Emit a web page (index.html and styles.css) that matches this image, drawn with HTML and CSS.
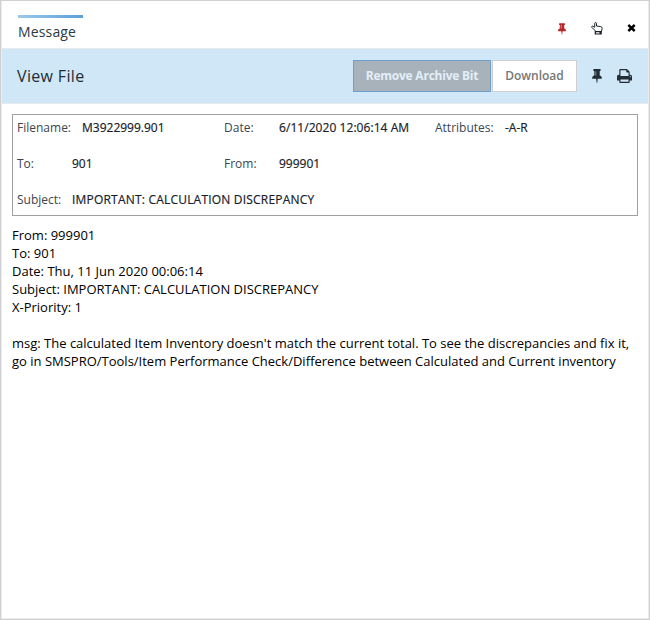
FILE: index.html
```html
<!DOCTYPE html>
<html lang="en">
<head>
<meta charset="utf-8">
<title>Message</title>
<link rel="stylesheet" href="styles.css">
</head>
<body>
<main class="window">
  <header class="titlebar">
    <div class="tab"><span class="tab-text">Message</span></div>
    <div class="window-actions">
      <svg class="pin-small" viewBox="320 128 1152 1664"><path d="M800 864v-448q0-14-9-23t-23-9-23 9-9 23v448q0 14 9 23t23 9 23-9 9-23zm672 352q0 26-19 45t-45 19h-429l-51 483q-2 12-10.5 20.5t-20.5 8.500h-1q-27 0-32-27l-76-485h-404q-26 0-45-19t-19-45q0-123 78.500-221.500t177.500-98.500v-512q-52 0-90-38t-38-90 38-90 90-38h640q52 0 90 38t38 90-38 90-90 38v512q99 0 177.500 98.500t78.500 221.500z"/></svg>
      <svg class="hand" viewBox="0 0 12 13"><path class="hand-line" d="M4 8.500 1 5.500Q.3 4.300 1.400 4L3.700 5.300V1.500Q3.700 .6 4.600.6T5.500 1.500V4L9.800 4.600Q11.300 5 11.200 6.400L10.400 9.500H4.500Z"/><path class="hand-cuff" fill-rule="evenodd" d="M3.700 9H10.800V12.500H3.700ZM5 10.200H8.500V11.400H5Z"/></svg>
      <svg class="close" viewBox="0 0 9 8"><path d="M1.300 1 7.700 7M7.700 1 1.300 7"/></svg>
    </div>
  </header>
  <section class="toolbar">
    <h1 class="title">View File</h1>
    <button class="btn btn-archive">Remove Archive Bit</button>
    <button class="btn btn-download">Download</button>
    <svg class="pin" viewBox="320 128 1152 1664"><path d="M800 864v-448q0-14-9-23t-23-9-23 9-9 23v448q0 14 9 23t23 9 23-9 9-23zm672 352q0 26-19 45t-45 19h-429l-51 483q-2 12-10.5 20.5t-20.5 8.500h-1q-27 0-32-27l-76-485h-404q-26 0-45-19t-19-45q0-123 78.500-221.500t177.500-98.500v-512q-52 0-90-38t-38-90 38-90 90-38h640q52 0 90 38t38 90-38 90-90 38v512q99 0 177.500 98.500t78.500 221.500z"/></svg>
    <svg class="print" viewBox="64 128 1664 1536"><path d="M448 1536h896v-256h-896v256zm0-640h896v-384h-160q-40 0-68-28t-28-68v-160h-640v640zm1152 64q0-26-19-45t-45-19-45 19-19 45 19 45 45 19 45-19 19-45zm128 0v416q0 13-9.500 22.500t-22.500 9.500h-224v160q0 40-28 68t-68 28h-960q-40 0-68-28t-28-68v-160h-224q-13 0-22.500-9.500t-9.500-22.500v-416q0-79 56.500-135.500t135.500-56.500h64v-544q0-40 28-68t68-28h672q40 0 88 20t76 48l152 152q28 28 48 76t20 88v256h64q79 0 135.500 56.500t56.500 135.500z"/></svg>
  </section>
  <section class="details">
    <div class="row">
      <div class="field"><span class="label label-file">Filename:</span><span class="value">M3922999.901</span></div>
      <div class="field"><span class="label">Date:</span><span class="value value-date">6/11/2020 12:06:14 AM</span></div>
      <div class="field"><span class="label label-attr">Attributes:</span><span class="value">-A-R</span></div>
    </div>
    <div class="row">
      <div class="field"><span class="label">To:</span><span class="value">901</span></div>
      <div class="field"><span class="label">From:</span><span class="value">999901</span></div>
    </div>
    <div class="row">
      <div class="field"><span class="label">Subject:</span><span class="value value-subject">IMPORTANT: CALCULATION DISCREPANCY</span></div>
    </div>
  </section>
  <article class="body">
    <p><span>From: 999901</span></p>
    <p><span>To: 901</span></p>
    <p><span>Date: Thu, 11 Jun 2020 00:06:14</span></p>
    <p><span>Subject: IMPORTANT: CALCULATION DISCREPANCY</span></p>
    <p><span>X-Priority: 1</span></p>
    <p class="msg">msg: The calculated Item Inventory doesn't match the current total. To see the discrepancies and fix it,<br>go in SMSPRO/Tools/Item Performance Check/Difference between Calculated and Current inventory</p>
  </article>
</main>
</body>
</html>
```
FILE: styles.css
```css
* { box-sizing: border-box; }
body { margin: 0; background: #fff; font-family: "Open Sans", sans-serif; }
.window { height: 620px; border: 1px solid #d0d0d3; box-shadow: inset -1px -1px #ececee, inset 1px 0 #ececee; color: #000; }
.titlebar { display: flex; height: 47px; padding: 14px 13px 0 17px; }
.tab { width: 65px; height: 32px; color: #2b3a45; font-size: 14px; line-height: 19px; letter-spacing: 0.15px; white-space: nowrap; }
.tab::before { content: ""; display: block; height: 3px; margin-bottom: 4px; background: linear-gradient(90deg, #9cc8e9, #5ba0da); }
.window-actions { display: flex; align-items: flex-start; margin-left: auto; }
.pin-small { width: 8px; height: 12px; margin: 8px 25px 0 0; fill: #b8282b; }
.hand { width: 12px; height: 13px; margin: 7px 24px 0 0; }
.hand-line { fill: #fff; stroke: #1c222b; stroke-width: 1; }
.hand-cuff { fill: #1c222b; }
.close { width: 9px; height: 8px; margin-top: 9px; }
.close path { stroke: #000; stroke-width: 2.400; }
.toolbar { display: flex; align-items: center; height: 56px; margin: 0 1px; padding: 0 16px 0 15px; background: #d0e7f7; border-top: 1px solid #e6ebef; border-bottom: 1px solid #e6ebef; }
.title { margin: 0 auto 0 0; color: #222d35; font-size: 16px; font-weight: 400; line-height: 22px; letter-spacing: 0.35px; }
.btn { height: 32px; padding: 0; border: 1px solid; font: 600 12px/16px "Open Sans", sans-serif; white-space: nowrap; }
.btn-archive { width: 138px; margin-right: 1px; background: #a8b2ba; border-color: #6c9fcb; color: #e3eff8; font-weight: 700; letter-spacing: -0.23px; }
.btn-download { width: 85px; margin: 0 15px 0 0; background: #fff; border-color: #cfcfd1; color: #777; }
.pin { width: 10px; height: 14px; margin-right: 15px; fill: #222d35; }
.print { width: 15px; height: 14px; fill: #222d35; }
.details { height: 102px; margin: 10px 11px 0; border: 1px solid #a0a0a0; padding-left: 4px; font-size: 12px; line-height: 16px; }
.row { display: grid; grid-template-columns: 207px 211px 1fr; height: 36px; padding-top: 5px; white-space: nowrap; }
.field { display: flex; }
.label { width: 55px; flex: none; color: #3a4550; }
.label-file { width: 65px; }
.label-attr { width: 70px; }
.value { color: #17202a; -webkit-text-stroke: 0.18px #17202a; }
.value-date { letter-spacing: 0.06px; }
.value-subject { letter-spacing: 0.2px; }
.body { margin: 10px 11px 0; font-size: 13px; line-height: 18px; white-space: nowrap; }
.body p { margin: 0; }
.body .msg { margin-top: 18px; }
```
